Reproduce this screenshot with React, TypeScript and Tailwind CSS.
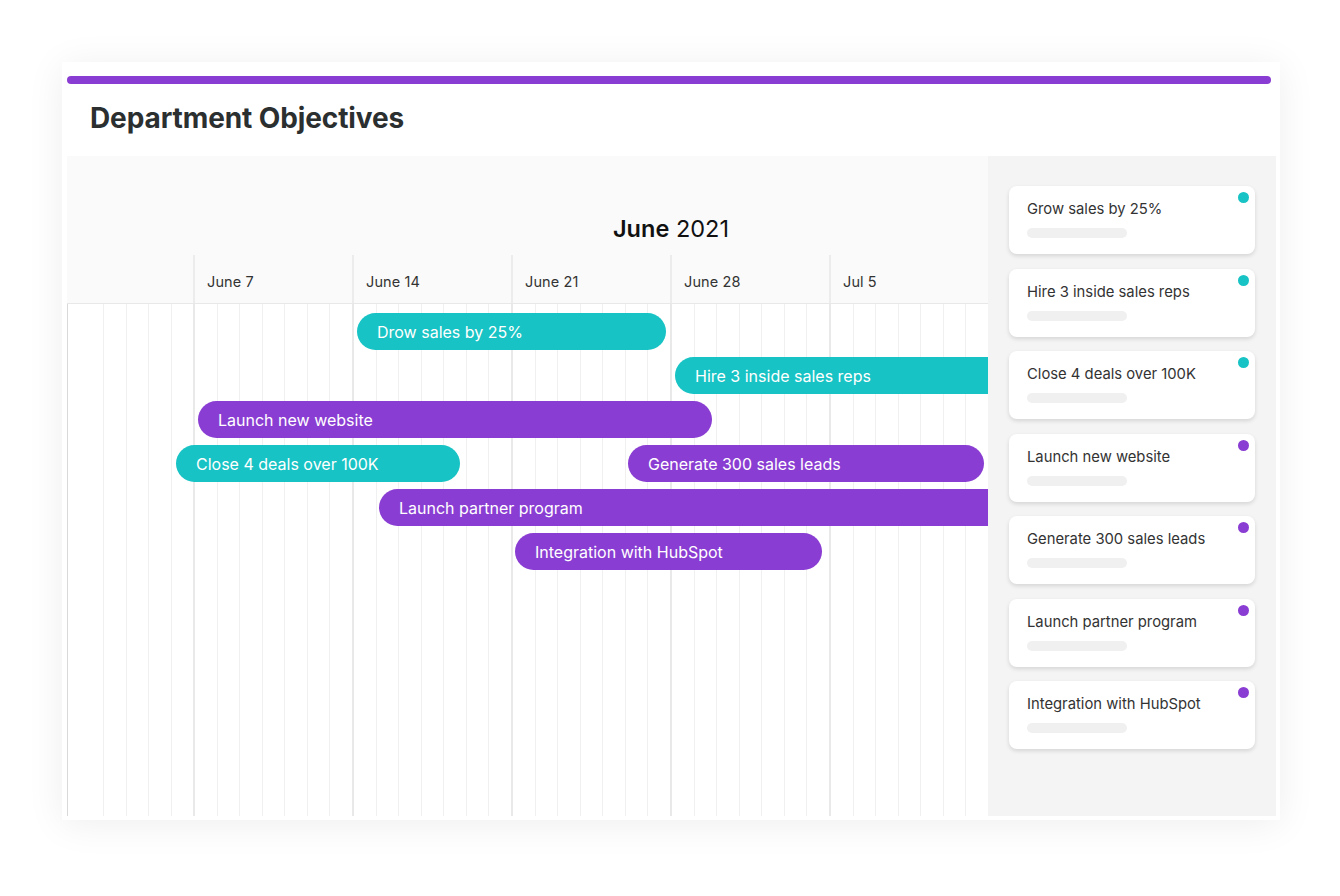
import React from 'react'

const PURPLE = 'bg-[#8a3dd2]'
const TEAL = 'bg-[#17c3c4]'

type Bar = { label: string; left: number; width: number; color: 'teal' | 'purple' }

const rows: Bar[][] = [
  [{ label: 'Drow sales by 25%', left: 290, width: 309, color: 'teal' }],
  [{ label: 'Hire 3 inside sales reps', left: 608, width: 360, color: 'teal' }],
  [{ label: 'Launch new website', left: 131, width: 514, color: 'purple' }],
  [
    { label: 'Close 4 deals over 100K', left: 109, width: 284, color: 'teal' },
    { label: 'Generate 300 sales leads', left: 168, width: 356, color: 'purple' },
  ],
  [{ label: 'Launch partner program', left: 312, width: 660, color: 'purple' }],
  [{ label: 'Integration with HubSpot', left: 448, width: 307, color: 'purple' }],
]

const objectives = [
  { title: 'Grow sales by 25%', color: 'teal' },
  { title: 'Hire 3 inside sales reps', color: 'teal' },
  { title: 'Close 4 deals over 100K', color: 'teal' },
  { title: 'Launch new website', color: 'purple' },
  { title: 'Generate 300 sales leads', color: 'purple' },
  { title: 'Launch partner program', color: 'purple' },
  { title: 'Integration with HubSpot', color: 'purple' },
]

const weeks = ['June 7', 'June 14', 'June 21', 'June 28', 'Jul 5']
const days = [0, 1, 2, 3, 4, 5, 6]

function WeekGrid() {
  return (
    <div className="absolute inset-0 flex">
      {/* lead-in column before June 7 */}
      <div className="flex w-[126px] shrink-0 border-l border-[#d9d9d9]">
        <div className="w-[35px] shrink-0" />
        <div className="flex-1 border-l border-[#f0f0f0]" />
        <div className="flex-1 border-l border-[#f0f0f0]" />
        <div className="flex-1 border-l border-[#f0f0f0]" />
        <div className="flex-1 border-l border-[#f0f0f0]" />
      </div>
      {weeks.map((w) => (
        <div key={w} className="flex w-[159px] shrink-0 border-l-2 border-[#e9e9e9]">
          {days.map((d) => (
            <div key={d} className={d === 0 ? 'flex-1' : 'flex-1 border-l border-[#f0f0f0]'} />
          ))}
        </div>
      ))}
    </div>
  )
}

export default function App() {
  return (
    <div className="min-h-screen bg-white pt-[62px] pl-[62px] font-['Inter','Liberation_Sans',sans-serif]">
      <div className="flex h-[758px] w-[1218px] flex-col bg-white px-[5px] pt-[14px] shadow-[0_4px_36px_rgba(0,0,0,0.07)]">
        {/* Top accent */}
        <div className={`h-2 w-[1204px] rounded-full ${PURPLE}`} />

        {/* Header */}
        <div className="flex h-[72px] items-center pb-[5px] pl-[23px]">
          <h1 className="text-[28px] font-bold tracking-[-0.1px] text-[#2b2f30]">Department Objectives</h1>
        </div>

        <div className="flex h-[660px] w-[1209px]">
          {/* Timeline */}
          <div className="flex w-[921px] shrink-0 flex-col overflow-hidden">
            <div className="h-[99px] shrink-0 bg-[#fafafa] pl-[546px] pt-[59px]">
              <p className="text-[23.5px] leading-[28px] text-[#111]">
                <span className="font-semibold">June</span> 2021
              </p>
            </div>
            <div className="flex h-[49px] shrink-0 border-b border-[#e8e8e8] bg-[#fafafa]">
              <div className="w-[126px] shrink-0" />
              {weeks.map((w) => (
                <div
                  key={w}
                  className="flex w-[159px] shrink-0 items-center border-l-2 border-[#ececec] pl-[12px] pt-[5px] text-[14.5px] tracking-[0.1px] text-[#333]"
                >
                  {w}
                </div>
              ))}
            </div>
            <div className="relative flex-1 bg-white">
              <WeekGrid />
              <div className="relative flex flex-col gap-[7px] pt-[9px]">
                {rows.map((row, i) => (
                  <div key={i} className="flex h-[37px]">
                    {row.map((b) => (
                      <div
                        key={b.label}
                        style={{ marginLeft: b.left, width: b.width }}
                        className={`flex h-[37px] shrink-0 items-center whitespace-nowrap rounded-full pl-[20px] text-[16px] text-white ${
                          b.color === 'teal' ? TEAL : PURPLE
                        }`}
                      >
                        {b.label}
                      </div>
                    ))}
                  </div>
                ))}
              </div>
            </div>
          </div>

          {/* Objectives list */}
          <div className="flex w-[288px] shrink-0 flex-col gap-[14.5px] bg-[#f4f4f4] pl-[21px] pt-[30px]">
            {objectives.map((o) => (
              <div
                key={o.title}
                className="relative h-[68px] w-[246px] rounded-[8px] bg-white pl-[18px] pt-[13px] shadow-[0_2px_4px_rgba(0,0,0,0.13)]"
              >
                <p className="text-[14.8px] leading-[20px] text-[#333]">{o.title}</p>
                <div className="mt-[9px] h-[10px] w-[100px] rounded-full bg-[#f0f0f0]" />
                <span
                  className={`absolute right-[6px] top-[6px] h-[11px] w-[11px] rounded-full ${
                    o.color === 'teal' ? TEAL : PURPLE
                  }`}
                />
              </div>
            ))}
          </div>
        </div>
      </div>
    </div>
  )
}
